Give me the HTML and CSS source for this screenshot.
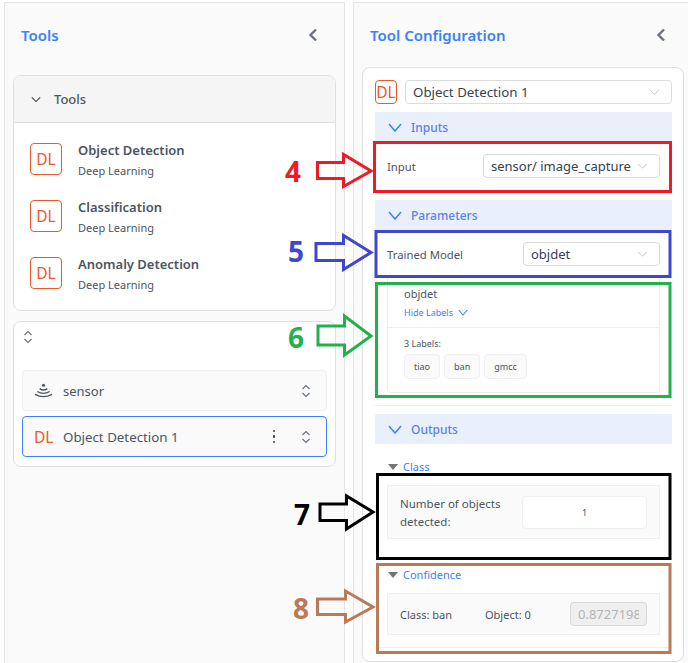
FILE: index.html
```html
<!DOCTYPE html>
<html lang="en">
<head>
<meta charset="utf-8">
<title>Tool Configuration</title>
<link rel="stylesheet" href="styles.css">
</head>
<body>
<main class="page">
  <section class="panel panel-left">
    <header class="panel-head">
      <h2>Tools</h2>
      <svg class="back" viewBox="0 0 10 14"><path d="M8 1.500 2.500 7 8 12.500"/></svg>
    </header>
    <div class="card tools-card">
      <div class="tools-head">
        <svg class="tools-chev" viewBox="0 0 12 8"><path d="M1 1.500 6 6.500 11 1.500"/></svg>
        <span>Tools</span>
      </div>
      <ul class="tool-list">
        <li class="tool"><span class="dl-box">DL</span><div><div class="tool-name">Object Detection</div><div class="tool-sub">Deep Learning</div></div></li>
        <li class="tool"><span class="dl-box">DL</span><div><div class="tool-name">Classification</div><div class="tool-sub">Deep Learning</div></div></li>
        <li class="tool"><span class="dl-box">DL</span><div><div class="tool-name">Anomaly Detection</div><div class="tool-sub">Deep Learning</div></div></li>
      </ul>
    </div>
    <div class="card flow-card">
      <svg class="updown top-updown" viewBox="0 0 10 14"><path d="M1.500 5 5 1.500 8.500 5M1.500 9 5 12.500 8.500 9"/></svg>
      <div class="flow-row">
        <svg class="sensor-icon" viewBox="0 0 20 15"><circle class="sensor-dot" cx="10" cy="2" r="1.600"/><path d="M6 5.500Q10 8.500 14 5.500M3.500 8.500Q10 12.500 16.500 8.500M1 11.500Q10 16.500 19 11.500"/></svg>
        <span class="flow-name">sensor</span>
        <svg class="updown" viewBox="0 0 10 14"><path d="M1.500 5 5 1.500 8.500 5M1.500 9 5 12.500 8.500 9"/></svg>
      </div>
      <div class="flow-row active">
        <span class="dl-plain">DL</span>
        <span class="flow-name wide">Object Detection 1</span>
        <span class="dots"><i></i><i></i><i></i></span>
        <svg class="updown" viewBox="0 0 10 14"><path d="M1.500 5 5 1.500 8.500 5M1.500 9 5 12.500 8.500 9"/></svg>
      </div>
    </div>
  </section>

  <section class="panel panel-right">
    <header class="panel-head">
      <h2>Tool Configuration</h2>
      <svg class="back" viewBox="0 0 10 14"><path d="M8 1.500 2.500 7 8 12.500"/></svg>
    </header>
    <div class="card config-card">
      <div class="config-top">
        <span class="dl-box small">DL</span>
        <div class="select grow wide"><span>Object Detection 1</span><svg class="sel-chev" viewBox="0 0 14 8"><path d="M1 1 7 7 13 1"/></svg></div>
      </div>

      <div class="section-head"><svg class="sec-chev" viewBox="0 0 14 9"><path d="M1 1 7 8 13 1"/></svg><span>Inputs</span></div>
      <div class="field-row input-row">
        <span class="field-label">Input</span>
        <div class="select input-select"><span>sensor/ image_capture</span><svg class="sel-chev" viewBox="0 0 14 8"><path d="M1 1 7 7 13 1"/></svg></div>
      </div>

      <div class="section-head params"><svg class="sec-chev" viewBox="0 0 14 9"><path d="M1 1 7 8 13 1"/></svg><span>Parameters</span></div>
      <div class="field-row model-row">
        <span class="field-label">Trained Model</span>
        <div class="select model-select"><span>objdet</span><svg class="sel-chev" viewBox="0 0 14 8"><path d="M1 1 7 7 13 1"/></svg></div>
      </div>

      <div class="model-box">
        <div class="model-top">
          <div class="model-name">objdet</div>
          <div class="hide-labels">Hide Labels <svg class="hide-chev" viewBox="0 0 10 7"><path d="M.8 1 5 6 9.200 1"/></svg></div>
        </div>
        <div class="model-labels">
          <div class="label-count">3 Labels:</div>
          <div class="chips"><span class="chip">tiao</span><span class="chip">ban</span><span class="chip">gmcc</span></div>
        </div>
      </div>
      <hr class="rule">

      <div class="section-head outputs"><svg class="sec-chev" viewBox="0 0 14 9"><path d="M1 1 7 8 13 1"/></svg><span>Outputs</span></div>

      <div class="out-title class-title"><i class="tri"></i><span>Class</span></div>
      <div class="out-box count-box">
        <span class="count-label">Number of objects detected:</span>
        <span class="count-value">1</span>
      </div>

      <div class="out-title conf-title"><i class="tri"></i><span>Confidence</span></div>
      <div class="out-box conf-box">
        <span class="conf-class">Class: ban</span>
        <span class="conf-object">Object: 0</span>
        <span class="conf-value"><span class="conf-text">0.8727198</span></span>
      </div>
      <hr class="rule last">
    </div>
  </section>

  <svg class="marks" viewBox="0 0 688 663" aria-hidden="true">
    <g class="m-red">
      <rect x="374.500" y="142.500" width="296" height="49"/>
      <path d="M317.500 162.500H343.500V154.500L371 171 343.500 186.500V178.500H317.500Z"/>
    </g>
    <g class="m-blue">
      <rect x="376" y="231.500" width="294" height="45"/>
      <path d="M316 243.500H343.500V235.500L371 252.500 343.500 269.500V260.500H316Z"/>
    </g>
    <g class="m-green">
      <rect x="376.500" y="283.500" width="293.500" height="113"/>
      <path d="M318 326H344.500V316L371 336 344.500 355V345H318Z"/>
    </g>
    <g class="m-black">
      <rect x="377.500" y="474.500" width="292.500" height="84"/>
      <path d="M320 504H346.500V496L373 512 346.500 529V520.500H320Z"/>
    </g>
    <g class="m-brown">
      <rect x="377.500" y="564.500" width="292.500" height="88"/>
      <path d="M317.500 599H345.500V591L373 607 345.500 622V614.500H317.500Z"/>
    </g>
  </svg>
  <span class="num num-4">4</span>
  <span class="num num-5">5</span>
  <span class="num num-6">6</span>
  <span class="num num-7">7</span>
  <span class="num num-8">8</span>
</main>
</body>
</html>
```

FILE: styles.css
```css
* { box-sizing: border-box; }
html, body { margin: 0; padding: 0; }
body {
  width: 688px;
  height: 663px;
  overflow: hidden;
  background: #fff;
  font-family: "Noto Sans", sans-serif;
  color: #4b5563;
}
.page {
  position: relative;
  display: flex;
  gap: 8px;
  width: 688px;
  height: 663px;
  padding: 2px 0 0 4px;
}
.panel {
  background: #fafafa;
  border: 1px solid #e5e5e5;
  border-bottom: 0;
  height: 661px;
}
.panel-left { width: 341px; padding: 0 8px; }
.panel-right { flex: 1; padding: 0 8px; margin-right: -6px; }
.panel-head {
  display: flex;
  align-items: center;
  justify-content: space-between;
  height: 64px;
  padding: 0 18px 0 8px;
  margin-bottom: 8px;
}
.panel-right .panel-head { margin-bottom: 0; padding-right: 19px; }
.panel-head h2 {
  margin: 0;
  font-size: 15px;
  font-weight: 600;
  color: #3b82f6;
}
.back {
  width: 10px;
  height: 14px;
  fill: none;
  stroke: #6b7280;
  stroke-width: 2.400;
}
.card {
  background: #fff;
  border: 1px solid #e0e0e0;
  border-radius: 8px;
}
.tools-card { height: 236px; overflow: hidden; }
.tools-head {
  display: flex;
  align-items: center;
  gap: 13px;
  height: 47px;
  padding-left: 17px;
  background: #f5f5f5;
  border-bottom: 1px solid #e0e0e0;
  font-size: 13px;
  font-weight: 500;
}
.tools-chev {
  width: 10px;
  height: 7px;
  fill: none;
  stroke: #374151;
  stroke-width: 1.300;
}
.tool-list {
  list-style: none;
  margin: 0;
  padding: 20px 0 0 16px;
  display: flex;
  flex-direction: column;
  gap: 25px;
}
.tool { display: flex; align-items: center; gap: 16px; height: 32px; }
.dl-box {
  display: flex;
  align-items: center;
  justify-content: center;
  width: 32px;
  height: 32px;
  flex: none;
  border: 1px solid #ea5a2a;
  border-radius: 4px;
  color: #ea5a2a;
  font-size: 15.500px;
}
.dl-box.small { width: 22px; height: 24px; }
.tool-name { font-size: 13px; font-weight: 600; line-height: 18px; }
.tool-sub { font-size: 11px; line-height: 14px; margin-top: 5px; }
.flow-card {
  height: 146px;
  margin-top: 10px;
  padding: 8px 8px 0;
  display: flex;
  flex-direction: column;
}
.updown {
  width: 10px;
  height: 14px;
  flex: none;
  fill: none;
  stroke: #6b7280;
  stroke-width: 1.200;
}
.top-updown { margin: 0 0 26px 1px; }
.flow-row {
  display: flex;
  align-items: center;
  height: 41px;
  padding: 0 15px 0 11px;
  margin-bottom: 5px;
  background: #fafafa;
  border: 1px solid #f0f0f0;
  border-radius: 4px;
}
.flow-row.active { border-color: #3b82f6; }
.sensor-icon {
  width: 19px;
  height: 15px;
  flex: none;
  fill: none;
  stroke: #4b5563;
  stroke-width: 1.400;
}
.sensor-dot { fill: #4b5563; stroke: none; }
.flow-name { flex: 1; margin-left: 10px; font-size: 13px; }
.flow-name.wide { font-size: 13.300px; }
.dl-plain { width: 19px; color: #ea5a2a; font-size: 15.500px; }
.dots {
  display: flex;
  flex-direction: column;
  gap: 3px;
  margin-right: 26px;
}
.dots i { width: 2.500px; height: 2.500px; background: #374151; border-radius: 50%; }
.config-card {
  width: 322px;
  height: 595px;
  padding: 12px 11px 0 12px;
}
.config-top { display: flex; gap: 8px; margin-bottom: 8px; }
.select {
  display: flex;
  align-items: center;
  justify-content: space-between;
  height: 24px;
  padding: 0 11px 0 7px;
  background: #fff;
  border: 1px solid #dcdcdc;
  border-radius: 4px;
  font-size: 13px;
  color: #374151;
}
.select.wide { font-size: 13.300px; }
.grow { flex: 1; }
.sel-chev {
  width: 11px;
  height: 6px;
  flex: none;
  fill: none;
  stroke: #bdbdbd;
  stroke-width: 1.200;
}
.section-head {
  display: flex;
  align-items: center;
  gap: 9px;
  height: 30px;
  padding-left: 13px;
  background: #e9f0fc;
  color: #5b82e8;
  font-size: 12px;
  font-weight: 500;
}
.sec-chev {
  width: 14px;
  height: 9px;
  flex: none;
  fill: none;
  stroke: #3b82f6;
  stroke-width: 1.500;
}
.field-row {
  display: flex;
  align-items: center;
  justify-content: space-between;
  padding: 0 12px;
}
.field-label { font-size: 11.300px; }
.input-row { height: 48px; }
.input-select { width: 177px; }
.params { margin-top: 10px; }
.model-row { height: 48px; }
.model-select { width: 137px; }
.model-box {
  width: 273px;
  height: 115px;
  margin: 0 0 0 12px;
  padding-top: 5px;
  background: #fff;
  border: 1px solid #eee;
  border-top: 0;
  border-radius: 0 0 4px 4px;
}
.model-top {
  height: 41px;
  padding-left: 16px;
  border-bottom: 1px solid #eee;
}
.model-name { font-size: 11px; line-height: 14px; margin-top: 4px; }
.hide-labels {
  display: flex;
  align-items: center;
  gap: 5px;
  margin-top: 5px;
  font-size: 9px;
  color: #3b82f6;
}
.hide-chev {
  width: 10px;
  height: 7px;
  fill: none;
  stroke: #3b82f6;
  stroke-width: 1.100;
}
.model-labels { padding: 10px 0 0 16px; }
.label-count { font-size: 9px; line-height: 12px; }
.chips { display: flex; gap: 4px; margin-top: 4px; }
.chip {
  display: flex;
  align-items: center;
  height: 25px;
  padding: 0 9px;
  background: #fafafa;
  border: 1px solid #f0f0f0;
  border-radius: 4px;
  font-size: 9px;
}
.rule { margin: 12px 0 0; border: 0; border-top: 1px solid #eee; }
.outputs { margin-top: 8px; }
.out-title {
  display: flex;
  align-items: center;
  gap: 5px;
  padding-left: 13px;
  font-size: 11px;
  line-height: 14px;
  color: #3b82f6;
}
.class-title { margin-top: 16px; }
.conf-title { margin-top: 29px; }
.tri {
  width: 0;
  height: 0;
  border-left: 5px solid transparent;
  border-right: 5px solid transparent;
  border-top: 6px solid #757575;
}
.out-box {
  display: flex;
  align-items: center;
  width: 273px;
  margin-left: 12px;
  background: #fafafa;
  border: 1px solid #f0f0f0;
  font-size: 11px;
}
.count-box { height: 54px; margin-top: 11px; padding: 0 12px; }
.count-label { width: 122px; padding-top: 2px; line-height: 18px; font-size: 11.500px; }
.count-value {
  display: flex;
  align-items: center;
  justify-content: center;
  width: 125px;
  height: 33px;
  background: #fff;
  border: 1px solid #f0f0f0;
  border-radius: 4px;
  font-size: 9px;
}
.conf-box { height: 42px; margin-top: 11px; padding: 0 12px; }
.conf-class { width: 85px; }
.conf-object { width: 85px; }
.conf-value {
  width: 77px;
  height: 24px;
  padding: 0 7px;
  line-height: 22px;
  background: #efefef;
  border: 1px solid #d8d8d8;
  border-radius: 4px;
  color: #b5b5b5;
  font-size: 13px;
}
.conf-text { display: block; white-space: nowrap; overflow: hidden; }
.rule.last { margin-top: 12px; }
.marks {
  position: absolute;
  left: 0;
  top: 0;
  width: 688px;
  height: 663px;
  fill: none;
  stroke-width: 3;
  pointer-events: none;
}
.m-red { stroke: #ed1c24; }
.m-blue { stroke: #3f48cc; }
.m-green { stroke: #22b14c; }
.m-black { stroke: #000; }
.m-brown { stroke: #b97a57; }
.num {
  position: absolute;
  font-family: "Open Sans", sans-serif;
  font-weight: 700;
  font-size: 28px;
  line-height: 30px;
}
.num-4 { left: 285px; top: 156px; color: #ed1c24; }
.num-5 { left: 288px; top: 236px; color: #3f48cc; }
.num-6 { left: 288px; top: 322px; color: #22b14c; }
.num-7 { left: 294px; top: 499px; color: #000; }
.num-8 { left: 293px; top: 593px; color: #b97a57; }
```
